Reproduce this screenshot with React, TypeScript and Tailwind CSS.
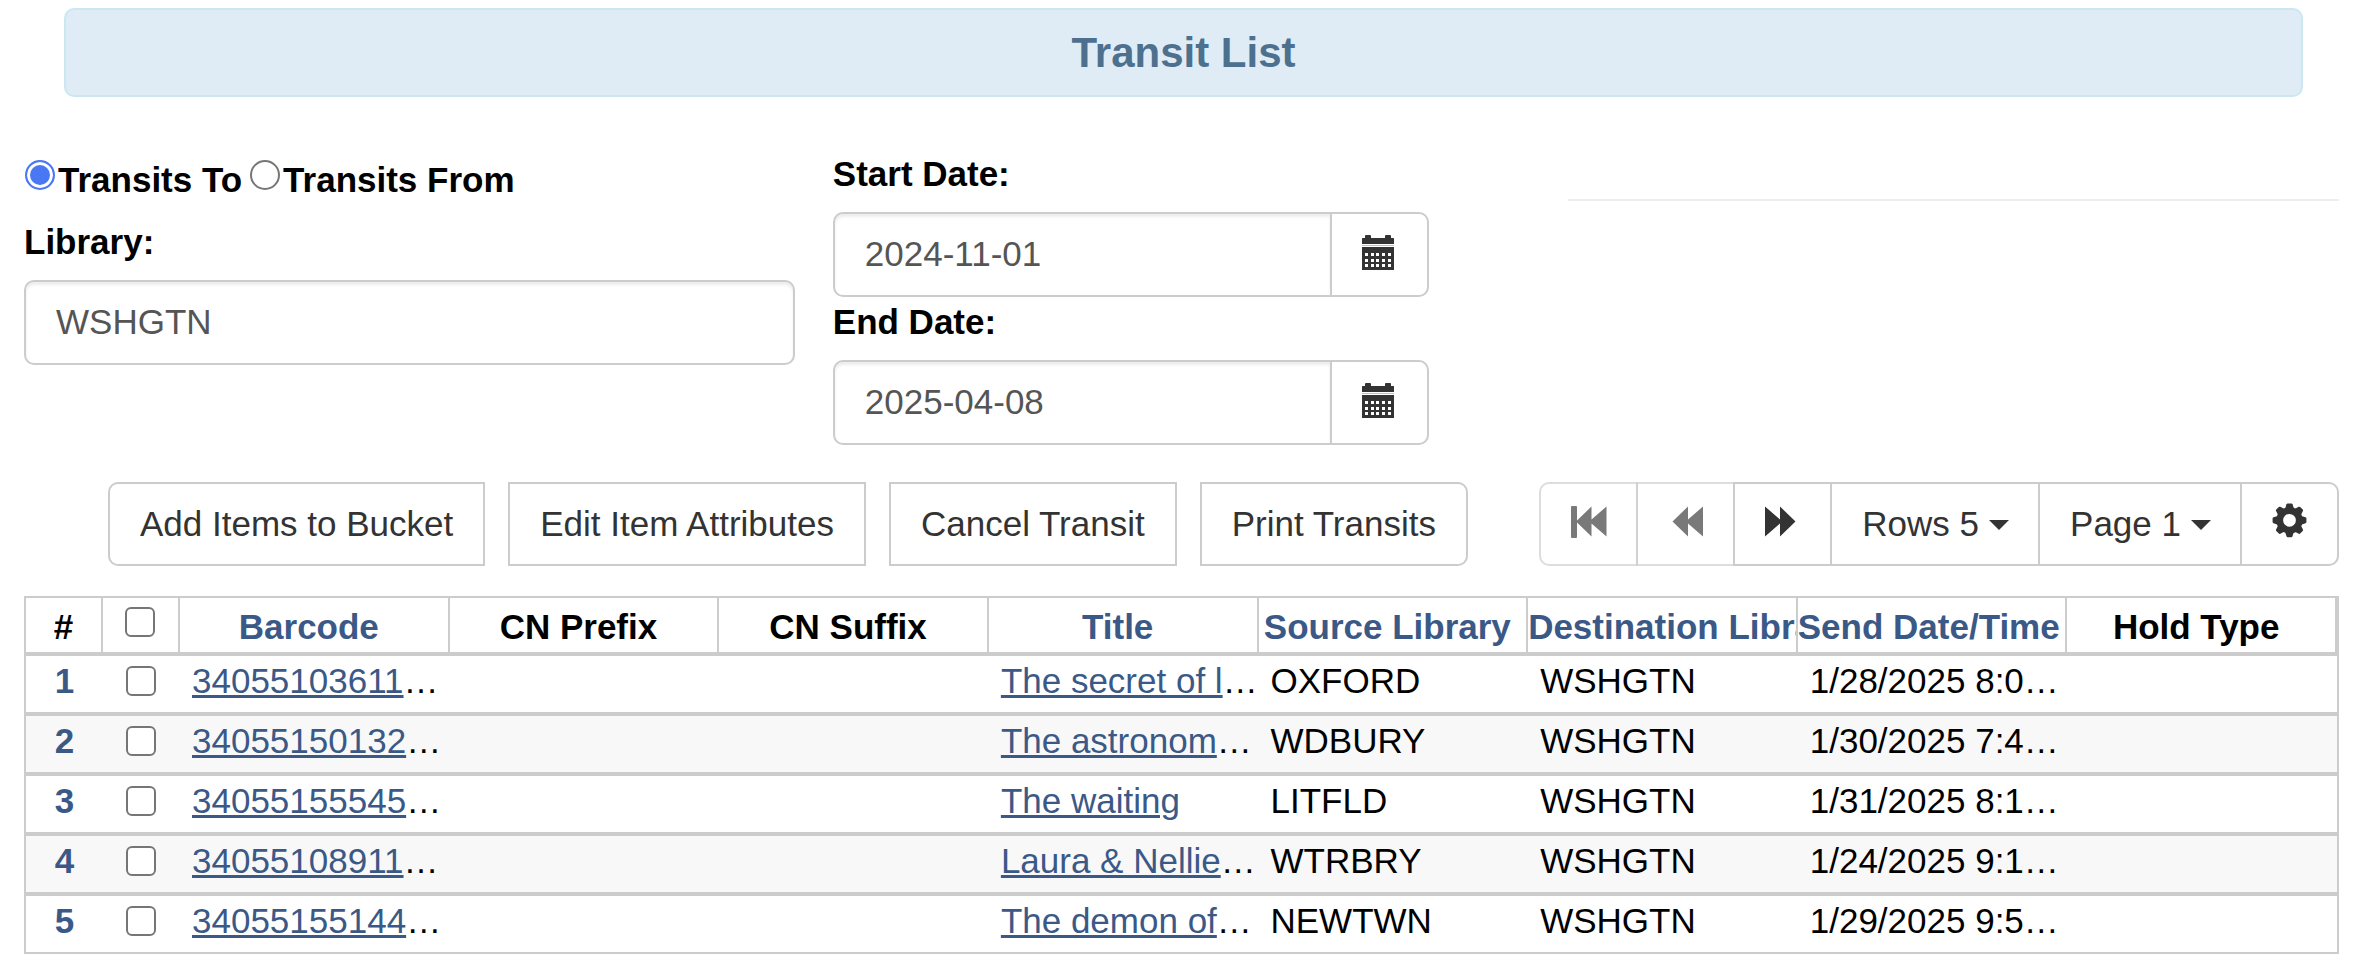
import { ReactNode, useState } from "react";

interface Transit {
  barcode: string;
  title: string;
  source: string;
  destination: string;
  sent: string;
}

const transits: Transit[] = [
  { barcode: "34055103611842", title: "The secret of life", source: "OXFORD", destination: "WSHGTN", sent: "1/28/2025 8:04 AM" },
  { barcode: "34055150132276", title: "The astronomers", source: "WDBURY", destination: "WSHGTN", sent: "1/30/2025 7:42 AM" },
  { barcode: "34055155545209", title: "The waiting", source: "LITFLD", destination: "WSHGTN", sent: "1/31/2025 8:15 AM" },
  { barcode: "34055108911357", title: "Laura & Nellie stories", source: "WTRBRY", destination: "WSHGTN", sent: "1/24/2025 9:12 AM" },
  { barcode: "34055155144680", title: "The demon of unrest", source: "NEWTWN", destination: "WSHGTN", sent: "1/29/2025 9:51 AM" },
];

const columns = [
  { name: "Barcode", sortable: true },
  { name: "CN Prefix", sortable: false },
  { name: "CN Suffix", sortable: false },
  { name: "Title", sortable: true },
  { name: "Source Library", sortable: true },
  { name: "Destination Library", sortable: true },
  { name: "Send Date/Time", sortable: true },
  { name: "Hold Type", sortable: false },
];

const buttonClass = "border-2 border-[#ccc] bg-white py-[15px] px-[30px] text-[#333] whitespace-nowrap cursor-pointer";
const checkboxClass =
  "block mx-auto size-[30px] appearance-none rounded-md border-2 border-[#767676] bg-white checked:bg-[#4a78f5]";
const radioClass =
  "mt-[5px] mr-[3px] size-[30px] appearance-none rounded-full border-2 border-[#767676] bg-white checked:border-[#4a78f5] checked:bg-[#4a78f5] checked:shadow-[inset_0_0_0_3px_white]";
const inputClass =
  "h-[85px] min-w-0 border-2 border-[#ccc] bg-white px-[30px] pb-[2px] text-[#555] shadow-[inset_0_3px_3px_rgba(0,0,0,0.075)]";

const Icon = ({ children }: { children: ReactNode }) => (
  <svg className="h-[50px] w-[35px] overflow-visible" viewBox="0 0 35 50" fill="currentColor" aria-hidden="true">
    {children}
  </svg>
);

const CalendarIcon = () => (
  <Icon>
    <path d="M0 8.500q0-.5.500-.5H3V6q0-1 1-1h4q1 0 1 1v2h14V6q0-1 1-1h4q1 0 1 1v2h2.500q.5 0 .5.500V14H0z" />
    <path d="M0 15h32v1H0z" opacity="0.3" />
    <path
      fillRule="evenodd"
      d="M0 17h32v23H0zM3 23v3h3v-3zM9 23v3h3v-3zM14 23v3h3v-3zM20 23v3h3v-3zM26 23v3h3v-3zM3 29v3h3v-3zM9 29v3h3v-3zM14 29v3h3v-3zM20 29v3h3v-3zM26 29v3h3v-3zM3 34v3h3v-3zM9 34v3h3v-3zM14 34v3h3v-3zM20 34v3h3v-3zM26 34v3h3v-3z"
    />
  </Icon>
);

const GearIcon = () => (
  <Icon>
    <g transform="translate(17.5 21.3)">
      <circle r="9.8" fill="none" stroke="currentColor" strokeWidth="6.8" />
      {[0, 45, 90, 135, 180, 225, 270, 315].map((angle) => (
        <path key={angle} d="M-4.600 -11L-3 -16q.3-.9 1.200-.9h3.600q.9 0 1.200.9L4.600 -11z" transform={`rotate(${angle})`} />
      ))}
    </g>
  </Icon>
);

interface DateFieldProps {
  id: string;
  label: string;
  value: string;
}

const DateField = ({ id, label, value }: DateFieldProps) => {
  return (
    <div>
      <label htmlFor={id} className="mb-[13px] block font-bold">
        {label}
      </label>
      <div className="flex w-[596px] max-w-full">
        <input id={id} type="text" defaultValue={value} className={`${inputClass} flex-1 rounded-l-[10px]`} />
        <button
          type="button"
          aria-label={`Choose ${label}`}
          className="-ml-[2px] rounded-r-[10px] border-2 border-[#ccc] bg-white px-[30px] text-[#333]"
        >
          <CalendarIcon />
        </button>
      </div>
    </div>
  );
};

interface PagerSelectProps {
  label: string;
  options: string[];
}

const PagerSelect = ({ label, options }: PagerSelectProps) => {
  return (
    <div className="relative -ml-[2px] text-[#333]">
      <select
        aria-label={label}
        className="field-sizing-content h-full appearance-none border-2 border-[#ccc] bg-white py-[15px] pr-[59px] pl-[30px]"
      >
        {options.map((option) => (
          <option key={option}>{option}</option>
        ))}
      </select>
      {/* Caret */}
      <svg
        className="pointer-events-none absolute top-[38px] right-[31px] h-[10px] w-[20px]"
        viewBox="0 0 20 10"
        fill="currentColor"
        aria-hidden="true"
      >
        <path d="M0 0h20L10 10z" />
      </svg>
    </div>
  );
};

const TransitTable = () => {
  return (
    <div className="mt-[30px] border-2 border-[#ccc]">
      <table className="w-full table-fixed border-separate border-spacing-0">
        <thead>
          <tr>
            <th className="w-[77px] border-r-2 border-b-4 border-[#ccc] p-0 pt-1">#</th>
            <th className="w-[77px] border-r-2 border-b-4 border-[#ccc] p-0 pr-[2px] pb-[6px]">
              <input type="checkbox" aria-label="Select all rows" className={checkboxClass} />
            </th>
            {columns.map((column) => (
              <th
                key={column.name}
                className="overflow-hidden border-r-2 border-b-4 border-[#ccc] p-0 pt-1 pr-[10px] whitespace-nowrap"
              >
                {column.sortable ? (
                  <a href="#" className="text-[#3b5987]">
                    {column.name}
                  </a>
                ) : (
                  column.name
                )}
              </th>
            ))}
          </tr>
        </thead>
        <tbody>
          {transits.map((transit, index) => (
            <tr
              key={transit.barcode}
              className="even:bg-[#f8f8f8] [&>td]:truncate [&>td]:border-b-4 [&>td]:border-[#ccc] [&>td]:pb-[6px] last:[&>td]:border-b-0"
            >
              <td className="text-center font-bold text-[#3b5987]">{index + 1}</td>
              <td className="pr-[2px]">
                <input type="checkbox" aria-label={`Select row ${index + 1}`} className={checkboxClass} />
              </td>
              <td className="pl-3">
                <a href="#" className="text-[#3b5987] underline decoration-3 underline-offset-2">
                  {transit.barcode}
                </a>
              </td>
              <td />
              <td />
              <td className="pl-3">
                <a href="#" className="text-[#3b5987] underline decoration-3 underline-offset-2">
                  {transit.title}
                </a>
              </td>
              <td className="pl-3">{transit.source}</td>
              <td className="pl-3">{transit.destination}</td>
              <td className="pl-3">{transit.sent}</td>
              <td />
            </tr>
          ))}
        </tbody>
      </table>
    </div>
  );
};

const App = () => {
  const [direction, setDirection] = useState("to");

  return (
    <main className="bg-white pt-2 pr-[39px] pl-6 font-['Liberation_Sans',Arial,sans-serif] text-[35px] leading-[50px] text-black">
      {/* Title banner */}
      <h1 className="mr-9 ml-10 rounded-[10px] border-2 border-[#cbe8f1] bg-[#dfecf6] py-5 text-center text-[42px] leading-[45px] font-bold text-[#4e708f]">
        Transit List
      </h1>

      {/* Filters */}
      <div className="mt-[52px] grid grid-cols-[21fr_19fr_21fr] gap-x-[38px]">
        <div className="pt-[6px]">
          <div className="mb-3 flex gap-2 pl-px font-bold">
            <label className="flex items-start whitespace-nowrap">
              <input
                type="radio"
                name="direction"
                checked={direction === "to"}
                onChange={() => setDirection("to")}
                className={radioClass}
              />
              Transits To
            </label>
            <label className="flex items-start whitespace-nowrap">
              <input
                type="radio"
                name="direction"
                checked={direction === "from"}
                onChange={() => setDirection("from")}
                className={radioClass}
              />
              Transits From
            </label>
          </div>
          <label htmlFor="library" className="mb-[13px] block font-bold">
            Library:
          </label>
          <input id="library" type="text" defaultValue="WSHGTN" className={`${inputClass} w-full rounded-[10px]`} />
        </div>

        <div>
          <DateField id="start-date" label="Start Date:" value="2024-11-01" />
          <DateField id="end-date" label="End Date:" value="2025-04-08" />
        </div>

        <hr className="mt-[50px] border-t-2 border-[#eee]" />
      </div>

      {/* Toolbar */}
      <div className="mt-[37px] flex justify-between pl-[84px]">
        <div className="flex gap-[23px]">
          <button type="button" className={`${buttonClass} rounded-l-[10px]`}>
            Add Items to Bucket
          </button>
          <button type="button" className={buttonClass}>
            Edit Item Attributes
          </button>
          <button type="button" className={buttonClass}>
            Cancel Transit
          </button>
          <button type="button" className={`${buttonClass} rounded-r-[10px]`}>
            Print Transits
          </button>
        </div>

        <div className="flex">
          <button type="button" disabled aria-label="First page" className={`${buttonClass} rounded-l-[10px] opacity-65`}>
            <Icon>
              <rect y="7" width="6" height="32" rx="1" />
              <path d="M5 22.5L20.5 7.5v13L35.5 7.5v30L20.5 24.5v13z" />
            </Icon>
          </button>
          <button type="button" disabled aria-label="Previous page" className={`${buttonClass} -ml-[2px] opacity-65`}>
            <Icon>
              <path d="M4.500 22.500L20 7.500v13L35 7.500v30L20 24.500v13z" />
            </Icon>
          </button>
          <button type="button" aria-label="Next page" className={`${buttonClass} -ml-[2px]`}>
            <Icon>
              <path d="M30.500 22.500L15 7.500v13L0 7.500v30L15 24.500v13z" />
            </Icon>
          </button>
          <PagerSelect label="Rows per page" options={["Rows 5", "Rows 10", "Rows 25", "Rows 50"]} />
          <PagerSelect label="Page" options={["Page 1", "Page 2", "Page 3"]} />
          <button type="button" aria-label="Grid settings" className={`${buttonClass} -ml-[2px] rounded-r-[10px]`}>
            <GearIcon />
          </button>
        </div>
      </div>

      <TransitTable />
    </main>
  );
};

export default App;
